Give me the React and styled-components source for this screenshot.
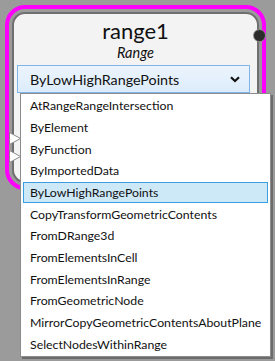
import React from 'react'
import styled, { createGlobalStyle } from 'styled-components'

const GlobalStyle = createGlobalStyle`
  html, body {
    margin: 0;
    padding: 0;
    background: #9b9b9b;
  }
  * {
    box-sizing: border-box;
  }
`

const modes = [
  'AtRangeRangeIntersection',
  'ByElement',
  'ByFunction',
  'ByImportedData',
  'ByLowHighRangePoints',
  'CopyTransformGeometricContents',
  'FromDRange3d',
  'FromElementsInCell',
  'FromElementsInRange',
  'FromGeometricNode',
  'MirrorCopyGeometricContentsAboutPlane',
  'SelectNodesWithinRange',
]

const selected = 'ByLowHighRangePoints'

const Triangle = () => (
  <svg width='12' height='13' viewBox='0 0 12 13'>
    <polygon points='0.5,0.5 11.5,6.5 0.5,12.5' fill='#ffffff' stroke='#8a8a8a' strokeWidth='1' />
  </svg>
)

const App = () => {
  return (
    <Canvas>
      <GlobalStyle />
      <Selection>
        <Card>
          <Title>range1</Title>
          <Subtitle>Range</Subtitle>
          <Select>
            <span>{selected}</span>
            <svg width='10' height='7' viewBox='0 0 10 7'>
              <path d='M1 1.2 L5 5 L9 1.2' fill='none' stroke='#111' strokeWidth='2.2' />
            </svg>
          </Select>
          <OutPort />
          <InPorts>
            <Triangle />
            <Triangle />
          </InPorts>
        </Card>
      </Selection>

      <List>
        {modes.map((m) => (
          <Item key={m} active={m === selected}>{m}</Item>
        ))}
      </List>
    </Canvas>
  )
}

export default App

const Canvas = styled.div`
  position: relative;
  width: 275px;
  height: 361px;
  overflow: hidden;
  background: #9b9b9b;
  font-family: Lato, 'Open Sans', sans-serif;
  color: #111;
`

const Selection = styled.div`
  position: absolute;
  left: 5px;
  top: 5px;
  width: 261px;
  height: 185px;
  border: 4px solid #ff00ff;
  border-radius: 20px;
  padding: 3px;
`

const Card = styled.div`
  position: relative;
  height: 100%;
  background: #f3f3f3;
  border: 2px solid #6f6f6f;
  border-radius: 13px;
  padding: 4px 7px 0 3px;
  display: flex;
  flex-direction: column;
  align-items: stretch;
`

const Title = styled.div`
  text-align: center;
  font-size: 22px;
  line-height: 26px;
  padding-left: 4px;
`

const Subtitle = styled.div`
  text-align: center;
  font-size: 14.5px;
  font-style: italic;
  line-height: 18px;
  padding-left: 4px;
`

const Select = styled.div`
  margin-top: 3px;
  height: 28px;
  display: flex;
  align-items: center;
  justify-content: space-between;
  padding: 0 9px 0 12px;
  border: 1px solid #7eb4ea;
  background: linear-gradient(#ecf4fc, #dcecfc);
  font-size: 14.3px;
`

const OutPort = styled.div`
  position: absolute;
  right: -8px;
  top: 16px;
  width: 11px;
  height: 11px;
  border-radius: 50%;
  background: #2b2b2b;
  box-shadow: 0 0 0 1px #8a8a8a;
`

const InPorts = styled.div`
  position: absolute;
  left: -5px;
  top: 118px;
  display: flex;
  flex-direction: column;
  gap: 5px;
  & > svg {
    display: block;
  }
`

const List = styled.div`
  position: absolute;
  left: 20px;
  top: 93px;
  width: 251px;
  height: 264px;
  background: #ffffff;
  border: 1px solid #8c8c8c;
  box-shadow: 2px 2px 0 rgba(0, 0, 0, 0.3);
  padding: 1px 2px;
`

const Item = styled.div`
  height: 21.67px;
  display: flex;
  align-items: center;
  padding-left: 6px;
  font-size: 12.3px;
  white-space: nowrap;
  border: 1px solid ${({ active }) => (active ? '#3b9ee0' : 'transparent')};
  background: ${({ active }) => (active ? '#cde8f7' : 'transparent')};
`
